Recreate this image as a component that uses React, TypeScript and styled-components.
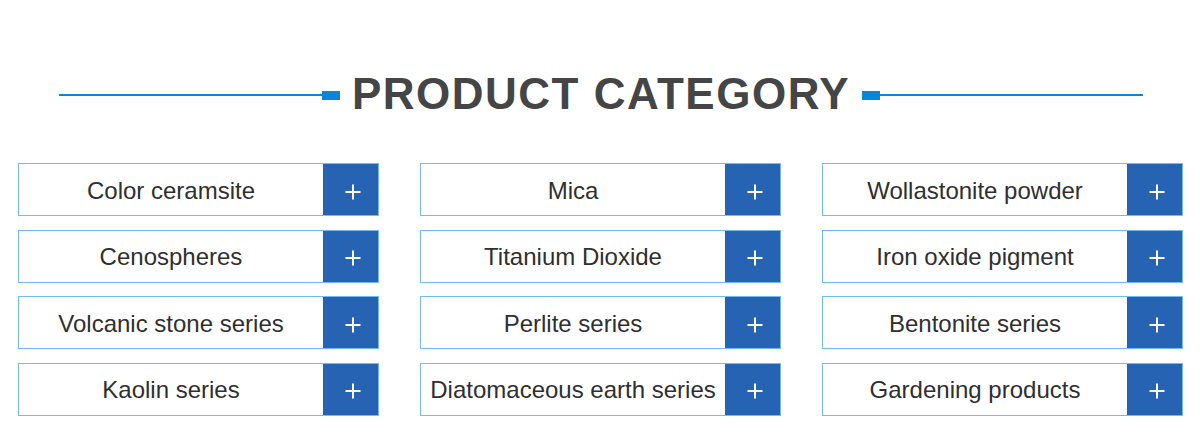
import React from "react";
import styled, { createGlobalStyle } from "styled-components";

const GlobalStyle = createGlobalStyle`
  html, body { margin: 0; padding: 0; background: #ffffff; }
  body { font-family: "Liberation Sans", Arial, sans-serif; }
`;

const Page = styled.div`
  width: 1200px;
  height: 448px;
  background: #fff;
  overflow: hidden;
`;

const Header = styled.div`
  display: flex;
  align-items: center;
  padding: 71px 57px 0 59px;
`;

const Line = styled.div`
  flex: 1;
  height: 2px;
  margin-top: 3px;
  background: #0a86d9;
`;

const Square = styled.div`
  width: 18px;
  height: 9px;
  margin-top: 3px;
  background: #0a86d9;
`;

const Title = styled.h1`
  margin: 0 12px 0 12px;
  font-family: "Liberation Sans", Arial, sans-serif;
  font-weight: 700;
  font-size: 44px;
  letter-spacing: 1.5px;
  line-height: 45px;
  color: #454545;
  white-space: nowrap;
`;

const Grid = styled.div`
  display: grid;
  grid-template-columns: repeat(3, 361px);
  grid-auto-rows: 53px;
  column-gap: 41px;
  row-gap: 13.5px;
  padding: 47px 0 0 18px;
`;

const Card = styled.a`
  display: flex;
  box-sizing: border-box;
  border: 1px solid #72bbee;
  text-decoration: none;
  background: #fff;
`;

const Label = styled.span`
  flex: 1;
  display: flex;
  align-items: center;
  justify-content: center;
  font-family: "Liberation Sans", Arial, sans-serif;
  font-size: 24px;
  color: #2f2f2f;
  white-space: nowrap;
  padding-top: 2px;
`;

const PlusButton = styled.span`
  position: relative;
  width: 55px;
  background: #2664b3;
  &::before, &::after {
    content: "";
    position: absolute;
    background: #ffffff;
    left: 50%;
    top: 50%;
  }
  &::before {
    width: 15px;
    height: 2px;
    transform: translate(calc(-50% + 2px), calc(-50% + 2px));
  }
  &::after {
    width: 2px;
    height: 15px;
    transform: translate(calc(-50% + 2px), calc(-50% + 2px));
  }
`;

const items = [
  "Color ceramsite",
  "Mica",
  "Wollastonite powder",
  "Cenospheres",
  "Titanium Dioxide",
  "Iron oxide pigment",
  "Volcanic stone series",
  "Perlite series",
  "Bentonite series",
  "Kaolin series",
  "Diatomaceous earth series",
  "Gardening products",
];

export default function App() {
  return (
    <Page>
      <GlobalStyle />
      <Header>
        <Line />
        <Square />
        <Title>PRODUCT CATEGORY</Title>
        <Square />
        <Line />
      </Header>
      <Grid>
        {items.map((t) => (
          <Card key={t} href="#">
            <Label>{t}</Label>
            <PlusButton />
          </Card>
        ))}
      </Grid>
    </Page>
  );
}
